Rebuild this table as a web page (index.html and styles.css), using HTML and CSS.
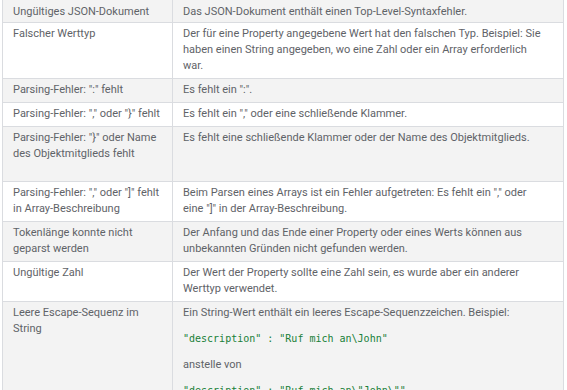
FILE: index.html
```html
<!DOCTYPE html>
<html lang="de">
<head>
<meta charset="utf-8">
<link rel="stylesheet" href="styles.css">
</head>
<body>
<table class="errors">
  <tr class="alt first-row"><td class="name">Ungültiges JSON-Dokument</td><td class="desc">Das JSON-Dokument enthält einen Top-Level-Syntaxfehler.</td></tr>
  <tr><td class="name">Falscher Werttyp</td><td class="desc">Der für eine Property angegebene Wert hat den falschen Typ. Beispiel: Sie haben einen String angegeben, wo eine Zahl oder ein Array erforderlich<br>war.</td></tr>
  <tr class="alt"><td class="name">Parsing-Fehler: ":" fehlt</td><td class="desc">Es fehlt ein ":".</td></tr>
  <tr><td class="name">Parsing-Fehler: "," oder "}" fehlt</td><td class="desc">Es fehlt ein "," oder eine schließende Klammer.</td></tr>
  <tr class="alt tall"><td class="name">Parsing-Fehler: "}" oder Name des Objektmitglieds fehlt</td><td class="desc">Es fehlt eine schließende Klammer oder der Name des Objektmitglieds.</td></tr>
  <tr><td class="name">Parsing-Fehler: "," oder "]" fehlt in Array-Beschreibung</td><td class="desc">Beim Parsen eines Arrays ist ein Fehler aufgetreten: Es fehlt ein "," oder<br>eine "]" in der Array-Beschreibung.</td></tr>
  <tr class="alt"><td class="name">Tokenlänge konnte nicht geparst werden</td><td class="desc">Der Anfang und das Ende einer Property oder eines Werts können aus unbekannten Gründen nicht gefunden werden.</td></tr>
  <tr><td class="name">Ungültige Zahl</td><td class="desc">Der Wert der Property sollte eine Zahl sein, es wurde aber ein anderer Werttyp verwendet.</td></tr>
  <tr class="alt"><td class="name">Leere Escape-Sequenz im String</td><td class="desc">
    <p class="para">Ein String-Wert enthält ein leeres Escape-Sequenzzeichen. Beispiel:</p>
    <p class="para"><code class="code">"description" : "Ruf mich an\John"</code></p>
    <p class="para">anstelle von</p>
    <p class="para"><code class="code">"description" : "Ruf mich an\"John\""</code></p>
  </td></tr>
</table>
</body>
</html>
```

FILE: styles.css
```css
html, body {
  margin: 0;
  padding: 0;
  background: #ffffff;
  overflow: hidden;
}

.errors {
  margin-left: 2px;
  width: 562px;
  border-collapse: collapse;
  font-family: Roboto, "Noto Sans", sans-serif;
  font-size: 11px;
  line-height: 16px;
  color: #5f6368;
}

.errors td {
  border: 1px solid #dadce0;
  vertical-align: top;
  padding: 3px 10px 4px 10px;
}

.first-row td {
  border-top: none;
  padding-top: 4px;
  padding-bottom: 2px;
}

.alt {
  background: #f3f3f3;
}

.name {
  width: 149px;
}

.tall td {
  padding-bottom: 19px;
}

.para {
  margin: 0 0 10px 0;
}

.code {
  font-family: "DejaVu Sans Mono", monospace;
  font-size: 10px;
  color: #188038;
}
```
